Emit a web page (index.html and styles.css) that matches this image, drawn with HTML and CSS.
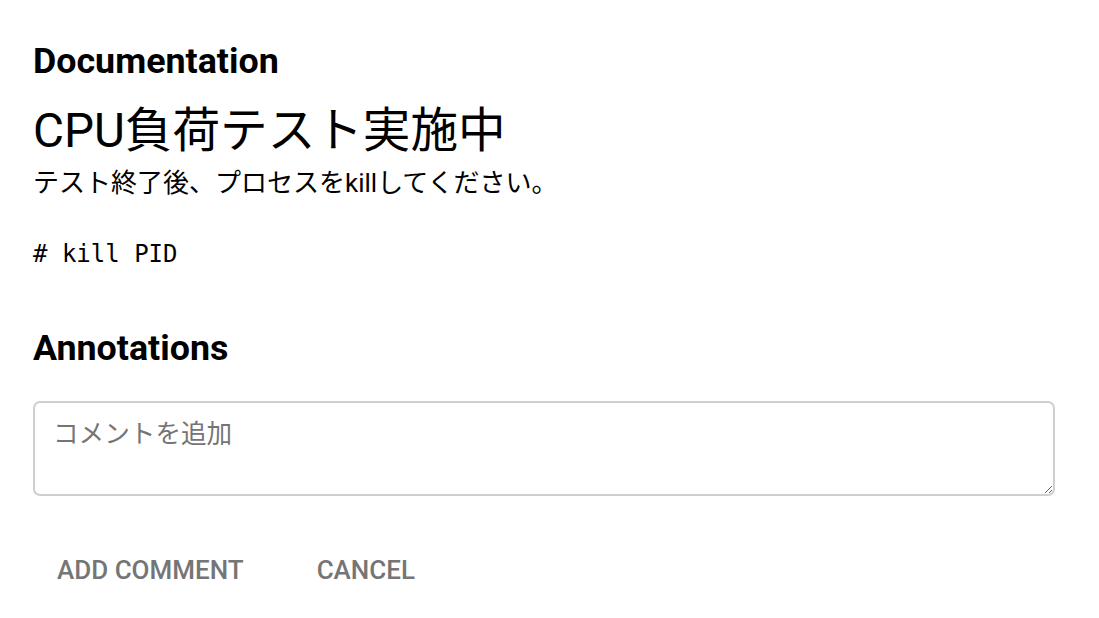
FILE: index.html
```html
<!DOCTYPE html>
<html lang="ja">
<head>
<meta charset="utf-8">
<title>Documentation</title>
<link rel="stylesheet" href="styles.css">
</head>
<body>
<main class="page">
  <section class="doc">
    <h3 class="section-title">Documentation</h3>
    <div class="doc-body">
      <h1 class="doc-h1">CPU負荷テスト実施中</h1>
      <p class="doc-p">テスト終了後、プロセスをkillしてください。</p>
      <pre class="doc-code"># kill PID</pre>
    </div>
  </section>
  <section class="annotations">
    <h3 class="section-title">Annotations</h3>
    <textarea class="comment-box" placeholder="コメントを追加"></textarea>
    <div class="actions">
      <button class="text-btn" type="button">Add comment</button>
      <button class="text-btn" type="button">Cancel</button>
    </div>
  </section>
</main>
</body>
</html>
```

FILE: styles.css
```css
html, body {
  margin: 0;
  padding: 0;
  background: #ffffff;
}

body {
  font-family: Roboto, "Noto Sans CJK JP", sans-serif;
  color: #000000;
}

.page {
  padding: 40px 44px 0 33px;
}

.section-title {
  margin: 0;
  font-family: Roboto, "Noto Sans CJK JP", sans-serif;
  font-weight: 700;
  font-size: 35.8px;
  line-height: 42px;
  color: #000;
}

.doc-body {
  margin-top: 21px;
}

.doc-h1 {
  margin: 0;
  font-family: Roboto, "Noto Sans CJK JP", sans-serif;
  font-weight: 400;
  font-size: 47.6px;
  line-height: 57px;
}

.doc-p {
  margin: 6px 0 0 0;
  font-size: 26px;
  line-height: 34px;
}

.doc-code {
  margin: 39px 0 0 0;
  font-family: "DejaVu Sans Mono", monospace;
  font-size: 24px;
  line-height: 30px;
}

.annotations {
  margin-top: 58px;
}

.comment-box {
  display: block;
  box-sizing: border-box;
  width: 100%;
  height: 95px;
  margin-top: 32px;
  padding: 15px 18px;
  border: 2px solid #cfcfcf;
  border-radius: 7px;
  font-family: Roboto, "Noto Sans CJK JP", sans-serif;
  font-size: 25.6px;
  line-height: 32px;
  color: #222;
  resize: vertical;
  outline: none;
}

.comment-box::placeholder {
  color: #757575;
}

.actions {
  display: flex;
  gap: 25px;
  margin-top: 51px;
}

.text-btn {
  background: none;
  border: none;
  padding: 8px 24px;
  font-family: Roboto, sans-serif;
  font-weight: 500;
  font-size: 26px;
  line-height: 30px;
  text-transform: uppercase;
  color: #757575;
  cursor: pointer;
}
```
